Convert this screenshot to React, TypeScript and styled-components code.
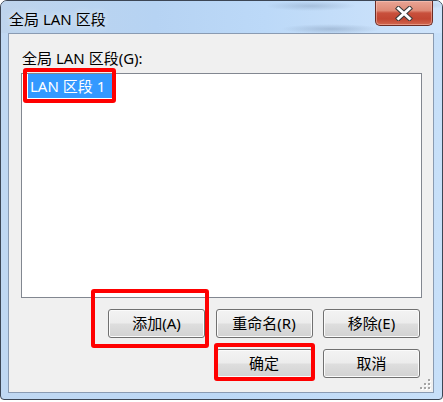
import styled, { createGlobalStyle } from 'styled-components';

const GlobalStyle = createGlobalStyle`
  * { box-sizing: border-box; }
  html, body {
    margin: 0;
    padding: 0;
    background: #ffffff;
  }
`;

const FONT = `"Noto Sans", "Noto Sans CJK SC", sans-serif`;

const Page = styled.div`
  position: relative;
  width: 443px;
  height: 402px;
  font-family: ${FONT};
`;

const Window = styled.div`
  width: 443px;
  height: 400px;
  border: 1px solid #3c4655;
  border-radius: 7px 7px 4px 4px;
  background: linear-gradient(90deg, #c0d8f2 0%, #bcd8f6 50%, #c8e0f9 100%);
  display: flex;
  flex-direction: column;
  padding: 0 8px 6px 7px;
  overflow: hidden;
`;

const TitleBar = styled.div`
  height: 32px;
  margin: 0 -8px 0 -7px;
  padding: 0 9px 0 8px;
  display: flex;
  justify-content: space-between;
  align-items: flex-start;
  background:
    radial-gradient(ellipse 45px 5px at 310px 5px, rgba(70, 90, 120, 0.22), transparent),
    radial-gradient(ellipse 50px 5px at 330px 28px, rgba(70, 90, 120, 0.25), transparent),
    radial-gradient(ellipse 30px 4px at 420px 4px, rgba(70, 90, 120, 0.15), transparent),
    linear-gradient(90deg, #bed4ec 0%, #b6d3f3 35%, #bcd9f8 60%, #cfe4fb 100%);
`;

const Title = styled.div`
  padding-top: 7px;
  font-size: 15px;
  line-height: 22px;
  color: #000;
  text-shadow: 0 0 6px rgba(255, 255, 255, 0.9);
`;

const CloseButton = styled.div`
  width: 58px;
  height: 25px;
  border: 1px solid #6b2c24;
  border-top: none;
  border-radius: 0 0 5px 5px;
  display: flex;
  align-items: center;
  justify-content: center;
  background: linear-gradient(
    180deg,
    #e9a595 0%,
    #de8a76 40%,
    #c8503c 50%,
    #c24632 75%,
    #d2684f 100%
  );
  box-shadow: inset 0 0 0 1px rgba(255, 210, 200, 0.45);
`;

const Client = styled.div`
  position: relative;
  width: 426px;
  height: 360px;
  border: 1px solid #8a9bb2;
  background: #f0f0f0;
  padding: 14px 11px 0 12px;
  display: flex;
  flex-direction: column;
`;

const FieldLabel = styled.div`
  padding-left: 1px;
  font-size: 15px;
  line-height: 20px;
  color: #000;
  margin-bottom: 5px;
`;

const ListBox = styled.div`
  height: 225px;
  border: 1px solid #828790;
  background: #ffffff;
  padding: 0 0 0 6px;
`;

const ListItem = styled.div<{ $selected?: boolean }>`
  display: inline-block;
  height: 24px;
  line-height: 24px;
  padding: 0 8px 0 2px;
  font-size: 15px;
  color: ${({ $selected }) => ($selected ? '#ffffff' : '#000000')};
  background: ${({ $selected }) => ($selected ? '#3399ff' : 'transparent')};
`;

const ButtonGrid = styled.div`
  margin-top: 11px;
  padding-right: 2px;
  display: grid;
  grid-template-columns: repeat(3, 97px);
  column-gap: 10.5px;
  row-gap: 11px;
  justify-content: end;
`;

const Button = styled.button<{ $col?: number }>`
  grid-column: ${({ $col }) => $col ?? 'auto'};
  height: 29px;
  border: 1px solid #707070;
  border-radius: 3px;
  background: linear-gradient(180deg, #f3f3f3 0%, #ececec 48%, #dedede 52%, #d2d2d2 100%);
  box-shadow: inset 0 0 0 1px #fbfbfb;
  font-family: ${FONT};
  font-size: 15px;
  color: #000;
  padding: 0;
  line-height: 27px;
`;

const Grip = styled.svg`
  position: absolute;
  right: 2px;
  bottom: 2px;
`;

const Annotation = styled.div<{ $x: number; $y: number; $w: number; $h: number }>`
  position: absolute;
  left: ${({ $x }) => $x}px;
  top: ${({ $y }) => $y}px;
  width: ${({ $w }) => $w}px;
  height: ${({ $h }) => $h}px;
  border: 4px solid #ff0000;
  border-radius: 3px;
  pointer-events: none;
`;

const CloseGlyph = () => (
  <svg width="18" height="15" viewBox="0 0 18 15">
    <path d="M3.5 2.5 L14.5 12.5 M14.5 2.5 L3.5 12.5" stroke="#3b3b3b" strokeWidth="5" strokeLinecap="square" />
    <path d="M3.5 2.5 L14.5 12.5 M14.5 2.5 L3.5 12.5" stroke="#ffffff" strokeWidth="3" strokeLinecap="square" />
  </svg>
);

const GripDots = () => {
  const dots = [
    [9, 1],
    [5, 5],
    [9, 5],
    [1, 9],
    [5, 9],
    [9, 9],
  ];
  return (
    <Grip width="12" height="12" viewBox="0 0 12 12">
      {dots.map(([x, y], i) => (
        <g key={i}>
          <rect x={x + 1} y={y + 1} width="2" height="2" fill="#ffffff" />
          <rect x={x} y={y} width="2" height="2" fill="#a4a4a4" />
        </g>
      ))}
    </Grip>
  );
};

export default function App() {
  return (
    <>
      <GlobalStyle />
      <Page>
        <Window>
          <TitleBar>
            <Title>全局 LAN 区段</Title>
            <CloseButton>
              <CloseGlyph />
            </CloseButton>
          </TitleBar>
          <Client>
            <FieldLabel>全局 LAN 区段(G):</FieldLabel>
            <ListBox>
              <ListItem $selected>LAN 区段 1</ListItem>
            </ListBox>
            <ButtonGrid>
              <Button>添加(A)</Button>
              <Button>重命名(R)</Button>
              <Button>移除(E)</Button>
              <Button $col={2}>确定</Button>
              <Button>取消</Button>
            </ButtonGrid>
            <GripDots />
          </Client>
        </Window>
        <Annotation $x={23} $y={68} $w={93} $h={35} />
        <Annotation $x={91} $y={289} $w={118} $h={59} />
        <Annotation $x={214} $y={343} $w={101} $h={38} />
      </Page>
    </>
  );
}
